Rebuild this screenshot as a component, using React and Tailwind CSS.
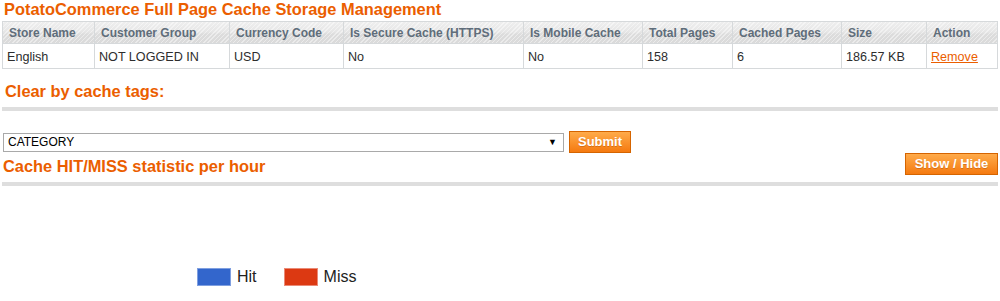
import React from 'react';

const TITLE_COLOR = '#eb5e00';

const columns = [
  { key: 'store', title: 'Store Name', width: 92 },
  { key: 'group', title: 'Customer Group', width: 135 },
  { key: 'currency', title: 'Currency Code', width: 114 },
  { key: 'secure', title: 'Is Secure Cache (HTTPS)', width: 180 },
  { key: 'mobile', title: 'Is Mobile Cache', width: 119 },
  { key: 'total', title: 'Total Pages', width: 90 },
  { key: 'cached', title: 'Cached Pages', width: 109 },
  { key: 'size', title: 'Size', width: 85 },
  { key: 'action', title: 'Action', width: 71 },
];

const rows = [
  {
    store: 'English',
    group: 'NOT LOGGED IN',
    currency: 'USD',
    secure: 'No',
    mobile: 'No',
    total: '158',
    cached: '6',
    size: '186.57 KB',
  },
];

const OrangeButton = ({ children, className = '' }) => (
  <button
    type="button"
    className={`h-[22px] border border-[#d56400] bg-[linear-gradient(to_bottom,#ffab4a,#f57a10)] text-[13px] font-bold leading-[20px] text-white [text-shadow:0_1px_0_rgba(150,60,0,0.35)] ${className}`}
  >
    {children}
  </button>
);

const SectionTitle = ({ children, className = '' }) => (
  <h2 className={`text-[16.4px] font-bold leading-[19px] ${className}`} style={{ color: TITLE_COLOR }}>
    {children}
  </h2>
);

const Divider = ({ className = '' }) => (
  <div className={`mx-[2px] h-[4px] bg-[#dedede] ${className}`} />
);

export default function App() {
  return (
    <div className="h-[301px] w-[1000px] overflow-hidden bg-white font-['Liberation_Sans',Arial,sans-serif]">
      <h1 className="h-[21px] pl-[4px] text-[16.4px] font-bold leading-[19px]" style={{ color: TITLE_COLOR }}>
        PotatoCommerce Full Page Cache Storage Management
      </h1>

      <table className="ml-[2px] w-[995px] table-fixed border-collapse border border-[#d6d9db]">
        <colgroup>
          {columns.map((col) => (
            <col key={col.key} style={{ width: col.width }} />
          ))}
        </colgroup>
        <thead>
          <tr className="h-[22px] bg-[repeating-linear-gradient(135deg,rgba(255,255,255,0.45)_0px,rgba(255,255,255,0.45)_1px,transparent_1px,transparent_3px),linear-gradient(to_bottom,#eeeeee_0%,#e6e6e6_45%,#dcdcdc_55%,#dadada_100%)]">
            {columns.map((col) => (
              <th
                key={col.key}
                className="border border-[#d6d9db] pl-[6px] text-left text-[12px] font-bold leading-[14px] text-[#5f6d7a]"
              >
                {col.title}
              </th>
            ))}
          </tr>
        </thead>
        <tbody>
          {rows.map((row) => (
            <tr key={row.store} className="h-[25px]">
              {columns.map((col) => (
                <td
                  key={col.key}
                  className="border border-[#d6d9db] pl-[4px] pt-[1px] text-[12.6px] leading-[14px] text-[#2d2d2d]"
                >
                  {col.key === 'action' ? (
                    <a href="#" className="underline" style={{ color: TITLE_COLOR }}>
                      Remove
                    </a>
                  ) : (
                    row[col.key]
                  )}
                </td>
              ))}
            </tr>
          ))}
        </tbody>
      </table>

      <SectionTitle className="mt-[13px] pl-[5px]">Clear by cache tags:</SectionTitle>
      <Divider className="mt-[6px]" />

      <div className="mt-[20px] flex items-center pl-[3px]">
        <div className="flex h-[19px] w-[561px] items-center justify-between border border-[#a9a9a9] bg-white pl-[4px] pr-[6px] text-[12px] text-black">
          <span>CATEGORY</span>
          <span className="text-[9px] leading-none">▼</span>
        </div>
        <OrangeButton className="ml-[5px] w-[62px]">Submit</OrangeButton>
      </div>

      <div className="flex items-start justify-between pl-[3px] pr-[2px]">
        <SectionTitle className="pt-[4px]">Cache HIT/MISS statistic per hour</SectionTitle>
        <OrangeButton className="w-[93px]">Show / Hide</OrangeButton>
      </div>
      <Divider className="mt-[6px]" />

      <div className="mt-[82px] flex items-center pl-[197px] text-[16px] leading-[18px] text-[#222]">
        <span className="h-[18px] w-[34px] border border-[#7f9fe0] bg-[#3366cc]" />
        <span className="ml-[6px]">Hit</span>
        <span className="ml-[27px] h-[18px] w-[34px] border border-[#ea8a76] bg-[#dc3912]" />
        <span className="ml-[6px]">Miss</span>
      </div>
    </div>
  );
}
